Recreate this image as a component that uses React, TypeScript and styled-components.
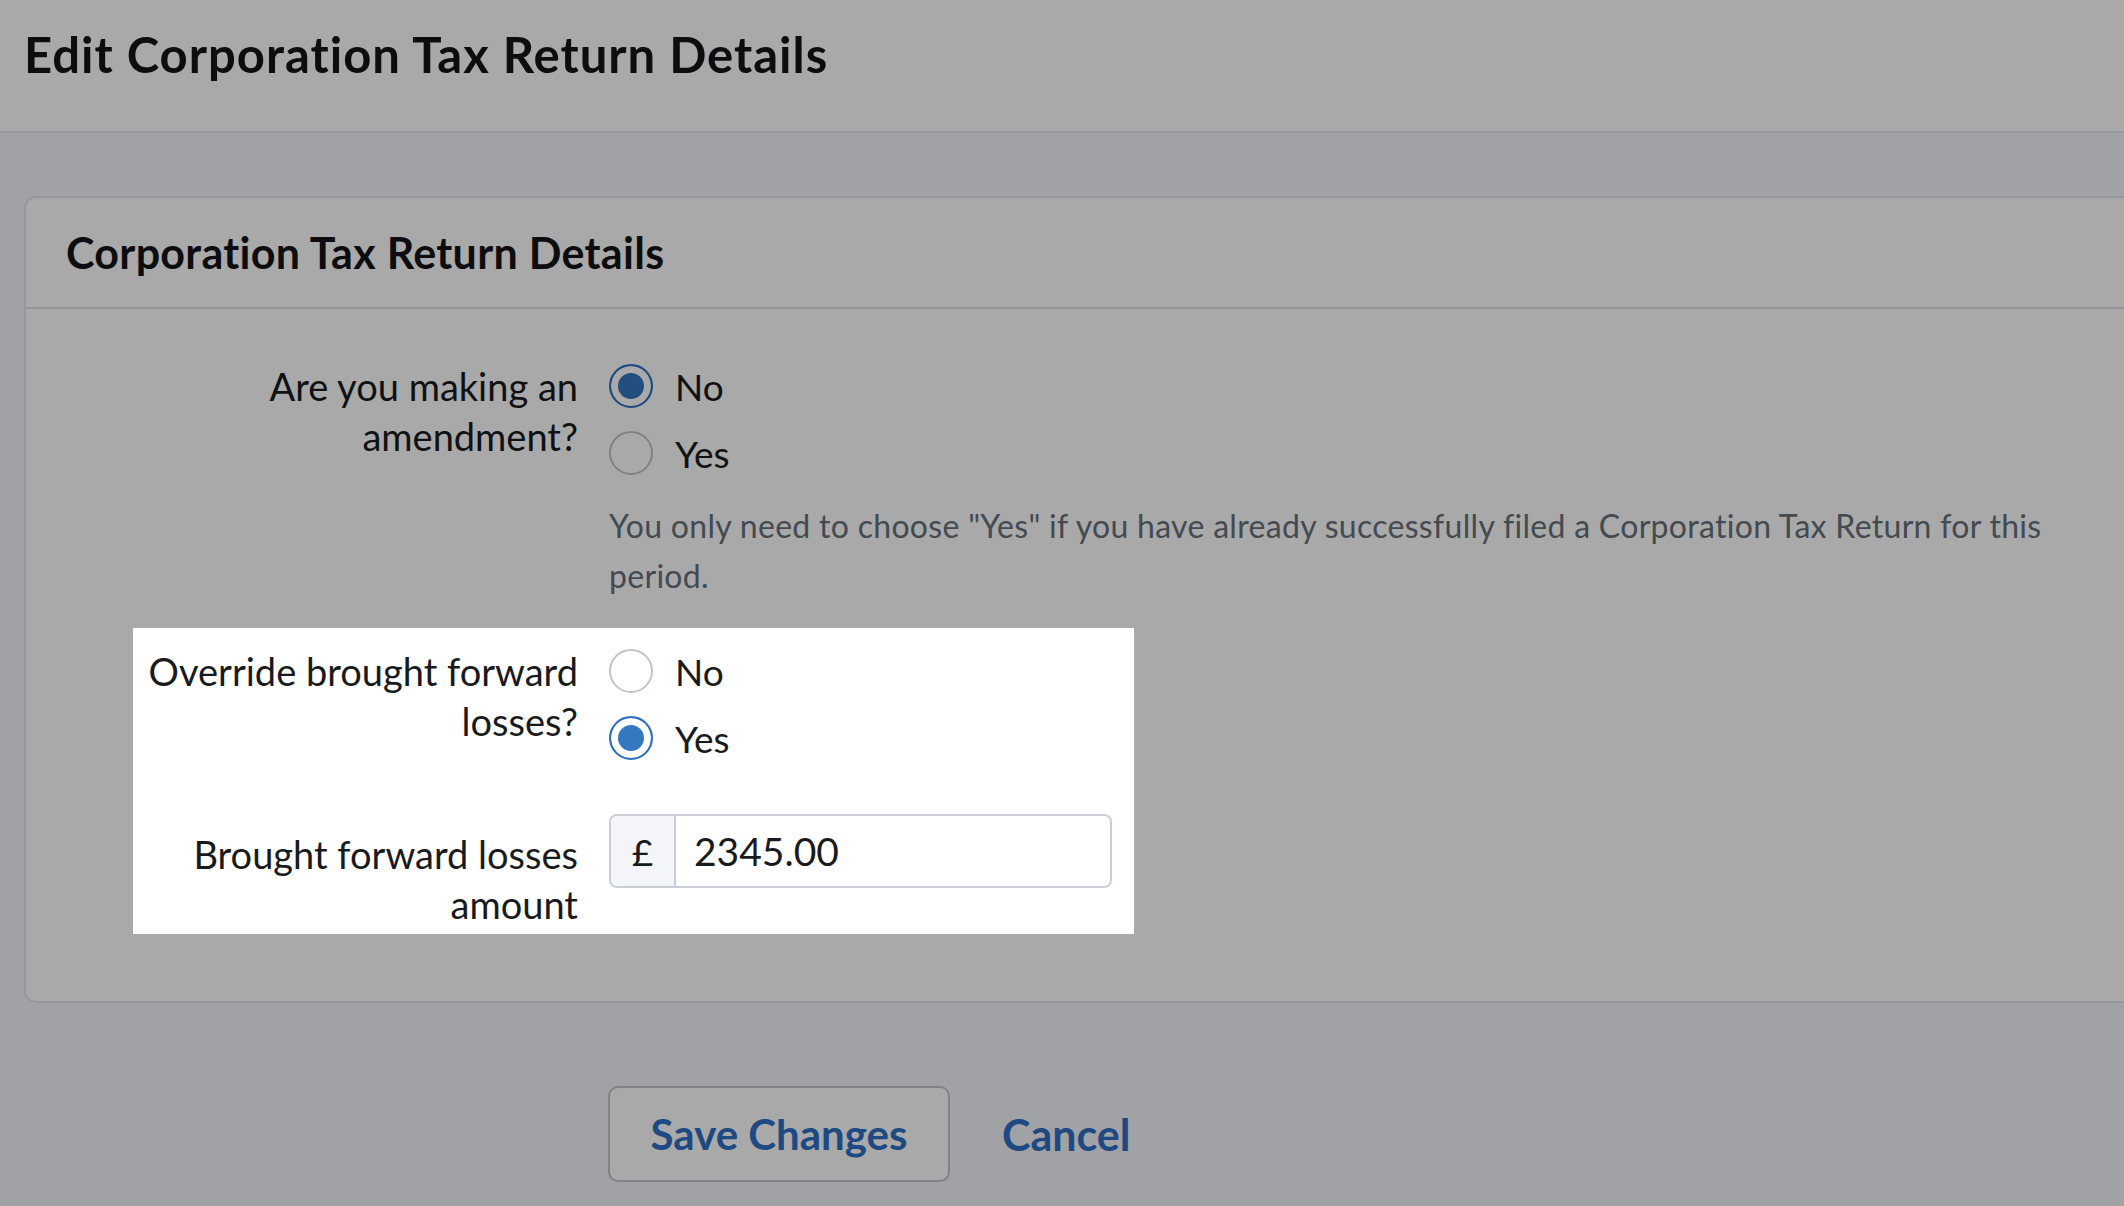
import styled, { createGlobalStyle } from 'styled-components';

const GlobalStyle = createGlobalStyle`
  html {
    overflow: hidden;
  }
  html, body {
    margin: 0;
    padding: 0;
    background: #f2f5fa;
  }
  body {
    min-height: 100vh;
    font-family: 'Lato', 'Liberation Sans', sans-serif;
    color: #181a1d;
  }
  * {
    box-sizing: border-box;
  }
`;

type Option = { label: string; checked: boolean };

const RadioGroup = ({ name, options }: { name: string; options: Option[] }) => (
  <Options>
    {options.map(o => (
      <OptionRow key={o.label}>
        <Radio type='radio' name={name} defaultChecked={o.checked} />
        <OptionText>{o.label}</OptionText>
      </OptionRow>
    ))}
  </Options>
);

const App = () => {
  return (
    <>
      <GlobalStyle />
      <Header>
        <PageTitle>Edit Corporation Tax Return Details</PageTitle>
      </Header>
      <Main>
        <Card>
          <CardHeader>
            <CardTitle>Corporation Tax Return Details</CardTitle>
          </CardHeader>
          <CardBody>
            <Row>
              <Label>Are you making an amendment?</Label>
              <Control>
                <RadioGroup
                  name='amendment'
                  options={[
                    { label: 'No', checked: true },
                    { label: 'Yes', checked: false },
                  ]}
                />
                <Help>
                  You only need to choose "Yes" if you have already successfully
                  filed a Corporation Tax Return for this period.
                </Help>
              </Control>
            </Row>

            {/* tour spotlight: everything else is dimmed by its shadow */}
            <Spotlight>
              <Row>
                <Label>Override brought forward losses?</Label>
                <Control>
                  <RadioGroup
                    name='override'
                    options={[
                      { label: 'No', checked: false },
                      { label: 'Yes', checked: true },
                    ]}
                  />
                </Control>
              </Row>
              <AmountRow>
                <Label $offset>Brought forward losses amount</Label>
                <InputGroup>
                  <Addon>£</Addon>
                  <AmountInput defaultValue='2345.00' />
                </InputGroup>
              </AmountRow>
            </Spotlight>
          </CardBody>
        </Card>

        <Actions>
          <SaveButton>Save Changes</SaveButton>
          <CancelLink href='#'>Cancel</CancelLink>
        </Actions>
      </Main>
    </>
  );
};

const Header = styled.header`
  height: 133px;
  background: #ffffff;
  border-bottom: 2px solid #e4e7ec;
  padding: 24px 0 0 24px;
`;

const PageTitle = styled.h1`
  margin: 0;
  font-size: 49px;
  font-weight: 700;
  letter-spacing: 1px;
  line-height: 60px;
  color: #141517;
`;

const Main = styled.main`
  padding: 63px 0 0 24px;
`;

const Card = styled.section`
  width: 2200px;
  background: #ffffff;
  border: 2px solid #e1e4ea;
  border-radius: 12px;
`;

const CardHeader = styled.div`
  height: 111px;
  border-bottom: 2px solid #e1e4ea;
  padding: 0 0 0 40px;
  display: flex;
  align-items: center;
`;

const CardTitle = styled.h2`
  margin: 0;
  font-size: 43px;
  font-weight: 700;
  letter-spacing: 0.3px;
  color: #141517;
`;

const CardBody = styled.div`
  padding: 52px 0 67px 107px;
  display: flex;
  flex-direction: column;
  align-items: flex-start;
`;

const Row = styled.div`
  display: grid;
  grid-template-columns: 445px 1fr;
  column-gap: 31px;
  align-items: start;
`;

const AmountRow = styled(Row)`
  margin-top: 51px;
`;

const Label = styled.label<{ $offset?: boolean }>`
  text-align: right;
  font-size: 38px;
  line-height: 50px;
  color: #181a1d;
  padding-top: ${({ $offset }) => ($offset ? '15px' : '0')};
`;

const Control = styled.div`
  display: flex;
  flex-direction: column;
`;

const Options = styled.div`
  display: flex;
  flex-direction: column;
  gap: 17px;
`;

const OptionRow = styled.label`
  display: flex;
  align-items: center;
  gap: 22px;
  height: 50px;
`;

const Radio = styled.input`
  appearance: none;
  margin: 0;
  width: 44px;
  height: 44px;
  border-radius: 50%;
  border: 2px solid #bfc4cc;
  background: #ffffff;

  &:checked {
    border-color: #2f6fc2;
    background: #3478c0;
    box-shadow: inset 0 0 0 7px #ffffff;
  }
`;

const OptionText = styled.span`
  font-size: 37px;
  color: #181a1d;
`;

const Help = styled.p`
  margin: 23px 0 0;
  max-width: 1460px;
  font-size: 32px;
  letter-spacing: 0.3px;
  line-height: 50px;
  color: #66707c;
`;

const Spotlight = styled.div`
  position: relative;
  z-index: 10;
  margin: 27px 0 0 0;
  padding: 18px 22px 5px 0;
  background: #ffffff;
  box-shadow: 0 0 0 4000px rgba(0, 0, 0, 0.337);
`;

const InputGroup = styled.div`
  display: flex;
  width: 503px;
  height: 74px;
  border: 2px solid #c9ced6;
  border-radius: 8px;
  overflow: hidden;
`;

const Addon = styled.span`
  width: 65px;
  display: flex;
  align-items: center;
  justify-content: center;
  background: #f3f5f8;
  border-right: 2px solid #c9ced6;
  font-size: 37px;
  color: #181a1d;
`;

const AmountInput = styled.input`
  flex: 1;
  min-width: 0;
  border: none;
  outline: none;
  padding: 0 0 0 18px;
  font-family: 'Lato', 'Liberation Sans', sans-serif;
  font-size: 39px;
  color: #181a1d;
  background: #ffffff;
`;

const Actions = styled.div`
  display: flex;
  align-items: center;
  gap: 52px;
  margin: 83px 0 0 584px;
`;

const SaveButton = styled.button`
  width: 342px;
  height: 96px;
  background: #ffffff;
  border: 2px solid #c0c4cc;
  border-radius: 10px;
  font-family: 'Lato', 'Liberation Sans', sans-serif;
  font-size: 42px;
  font-weight: 700;
  color: #2f6fc4;
  cursor: pointer;
`;

const CancelLink = styled.a`
  font-size: 43px;
  font-weight: 700;
  color: #2f6fc4;
  text-decoration: none;
`;

export default App;
